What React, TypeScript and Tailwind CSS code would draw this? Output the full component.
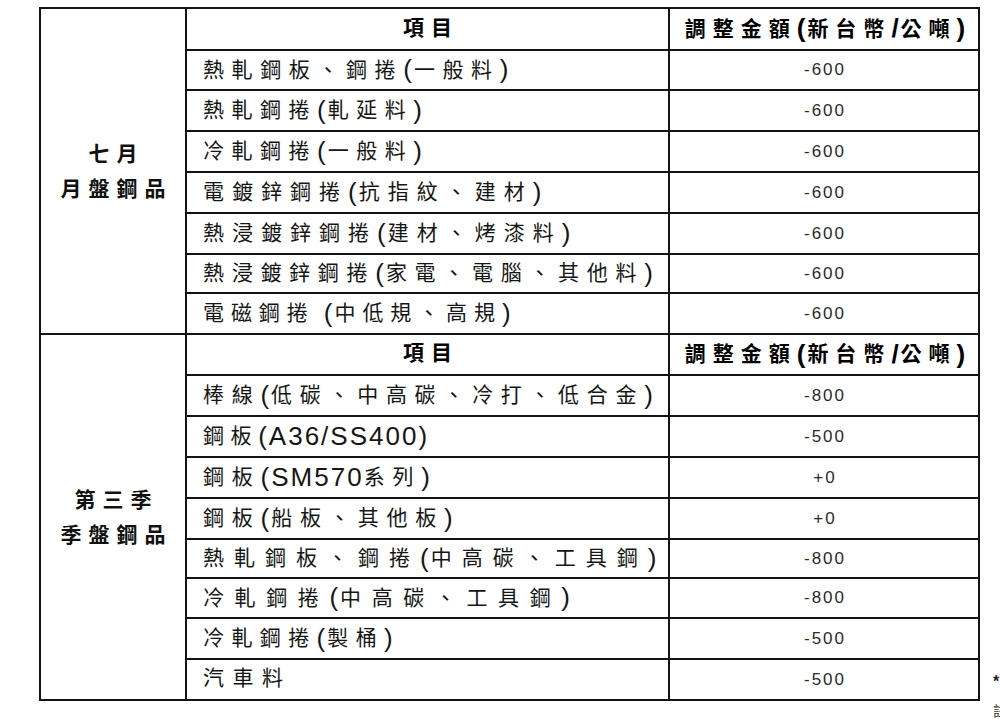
import React from "react";

type Row = { t: string; v: string; h: string; tr: string };

const LAT = "font-['Liberation_Sans'] text-[26px] tracking-[2px] leading-none";

function Mixed({ text, tr }: { text: string; tr: string }) {
  const parts = text.match(/[\u0000-\u00ff]+|[^\u0000-\u00ff]+/g) || [];
  return (
    <span className="inline-flex items-center whitespace-pre">
      {parts.map((p, i) =>
        /^[\u0000-\u00ff]+$/.test(p) ? (
          <span key={i} className={LAT}>
            {p}
          </span>
        ) : (
          <span key={i} className={"text-[21px] leading-none " + tr}>
            {p}
          </span>
        )
      )}
    </span>
  );
}

const sec1: Row[] = [
  { t: "熱軋鋼板、鋼捲(一般料)", v: "-600", h: "h-[40px]", tr: "tracking-[7.6px]" },
  { t: "熱軋鋼捲(軋延料)", v: "-600", h: "h-[41px]", tr: "tracking-[7.5px]" },
  { t: "冷軋鋼捲(一般料)", v: "-600", h: "h-[41px]", tr: "tracking-[7.5px]" },
  { t: "電鍍鋅鋼捲(抗指紋、建材)", v: "-600", h: "h-[41px]", tr: "tracking-[8px]" },
  { t: "熱浸鍍鋅鋼捲(建材、烤漆料)", v: "-600", h: "h-[41px]", tr: "tracking-[8px]" },
  { t: "熱浸鍍鋅鋼捲(家電、電腦、其他料)", v: "-600", h: "h-[39px]", tr: "tracking-[7.7px]" },
  { t: "電磁鋼捲 (中低規、高規)", v: "-600", h: "h-[41px]", tr: "tracking-[6.9px]" },
];

const sec2: Row[] = [
  { t: "棒線(低碳、中高碳、冷打、低合金)", v: "-800", h: "h-[41px]", tr: "tracking-[7.7px]" },
  { t: "鋼板(A36/SS400)", v: "-500", h: "h-[41px]", tr: "tracking-[6.6px]" },
  { t: "鋼板(SM570系列)", v: "+0", h: "h-[41px]", tr: "tracking-[7.8px]" },
  { t: "鋼板(船板、其他板)", v: "+0", h: "h-[41px]", tr: "tracking-[7.8px]" },
  { t: "熱軋鋼板、鋼捲(中高碳、工具鋼)", v: "-800", h: "h-[39px]", tr: "tracking-[10px]" },
  { t: "冷軋鋼捲(中高碳、工具鋼)", v: "-800", h: "h-[40px]", tr: "tracking-[10.6px]" },
  { t: "冷軋鋼捲(製桶)", v: "-500", h: "h-[41px]", tr: "tracking-[7.4px]" },
  { t: "汽車料", v: "-500", h: "h-[41px]", tr: "tracking-[8.5px]" },
];

const cell = "border-2 border-[#141414] p-0";

function HeaderCells() {
  return (
    <>
      <td className={cell + " text-center align-middle font-bold"}>
        <span className="text-[21px] leading-none tracking-[7px] pl-[7px]">項目</span>
      </td>
      <td className={cell + " text-center align-middle font-bold"}>
        <span className="inline-flex items-center whitespace-pre leading-none pl-[4px]">
          <span className="text-[21px] tracking-[7px]">調整金額</span>
          <span className={LAT}>(</span>
          <span className="text-[21px] tracking-[7px]">新台幣</span>
          <span className={LAT}>/</span>
          <span className="text-[21px] tracking-[7px]">公噸</span>
          <span className={LAT}>)</span>
        </span>
      </td>
    </>
  );
}

function DataCells({ r }: { r: Row }) {
  return (
    <>
      <td className={cell + " align-middle pl-[16px] text-[#161616]"}>
        <Mixed text={r.t} tr={r.tr} />
      </td>
      <td className={cell + " align-middle text-center"}>
        <span className="font-['Liberation_Sans'] text-[17px] tracking-[2px] pl-[2px] text-[#2a2a2a]">
          {r.v}
        </span>
      </td>
    </>
  );
}

function Label({ a, b }: { a: string; b: string }) {
  return (
    <div className="flex flex-col items-center font-bold text-[21px] leading-[35px] tracking-[7px] text-[#111]">
      <span className="pl-[7px]">{a}</span>
      <span className="pl-[7px]">{b}</span>
    </div>
  );
}

export default function App() {
  return (
    <div
      className="relative w-[1000px] h-[719px] overflow-hidden bg-white text-black font-['Liberation_Sans','Noto_Sans_CJK_TC',sans-serif]"
    >
      <div className="pl-[39px] pt-[7px]">
        <table className="table-fixed border-collapse w-[941px]">
          <colgroup>
            <col className="w-[146px]" />
            <col className="w-[483px]" />
            <col className="w-[310px]" />
          </colgroup>
          <tbody>
            <tr className="h-[42px]">
              <td rowSpan={8} className={cell + " align-middle text-center"}>
                <Label a="七月" b="月盤鋼品" />
              </td>
              <HeaderCells />
            </tr>
            {sec1.map((r, i) => (
              <tr key={"a" + i} className={r.h}>
                <DataCells r={r} />
              </tr>
            ))}
            <tr className="h-[41px]">
              <td rowSpan={9} className={cell + " align-middle text-center"}>
                <Label a="第三季" b="季盤鋼品" />
              </td>
              <HeaderCells />
            </tr>
            {sec2.map((r, i) => (
              <tr key={"b" + i} className={r.h}>
                <DataCells r={r} />
              </tr>
            ))}
          </tbody>
        </table>
      </div>
      <span className="absolute left-[993px] top-[674px] text-[16px] font-bold leading-none text-[#222]">
        *
      </span>
      <span className="absolute left-[993px] top-[704px] text-[14px] leading-none text-[#333]">
        註
      </span>
    </div>
  );
}
